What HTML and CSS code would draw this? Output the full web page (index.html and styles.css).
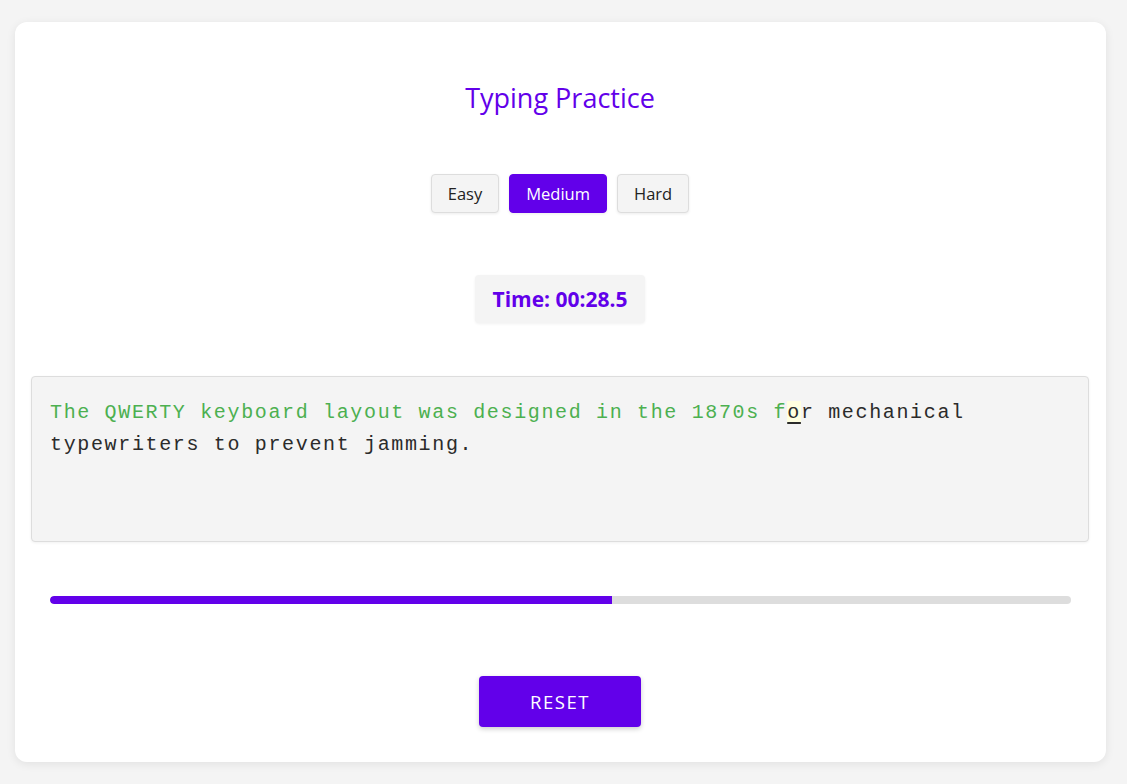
FILE: index.html
```html
<!DOCTYPE html>
<html lang="en">
<head>
<meta charset="utf-8">
<title>Typing Practice</title>
<link rel="stylesheet" href="styles.css">
</head>
<body>
<main class="card">
  <h1 class="title">Typing Practice</h1>
  <div class="levels">
    <button class="level">Easy</button>
    <button class="level active">Medium</button>
    <button class="level">Hard</button>
  </div>
  <div class="timer-wrap"><div class="timer">Time: 00:28.5</div></div>
  <div class="passage"><span class="done">The QWERTY keyboard layout was designed in the 1870s f</span><span class="current">o</span><span class="todo">r mechanical typewriters to prevent jamming.</span></div>
  <div class="progress"><div class="progress-fill" style="width: 55%"></div></div>
  <div class="actions"><button class="reset">RESET</button></div>
</main>
</body>
</html>
```

FILE: styles.css
```css
* { box-sizing: border-box; }
html, body { margin: 0; padding: 0; }
body {
  background: #f4f4f4;
  font-family: "Open Sans", "Noto Sans", sans-serif;
  color: #333;
  padding: 22px 21px 22px 15px;
}
.card {
  background: #fff;
  border-radius: 12px;
  box-shadow: 0 2px 10px rgba(0,0,0,0.08);
  padding: 56px 17px 34px 16px;
  height: 740px;
}
.title {
  margin: 0;
  text-align: center;
  font-weight: 400;
  font-size: 27px;
  line-height: 40px;
  color: #6200ea;
}
.levels {
  display: flex;
  justify-content: center;
  gap: 10px;
  margin-top: 56px;
}
.level {
  height: 39px;
  padding: 0 16px;
  font-family: inherit;
  font-size: 16.5px;
  color: #222;
  background: #f4f4f4;
  border: 1px solid #ddd;
  border-radius: 4px;
  box-shadow: 0 1px 3px rgba(0,0,0,0.08);
}
.level.active {
  background: #6200ea;
  border-color: #6200ea;
  color: #fff;
}
.timer-wrap {
  display: flex;
  justify-content: center;
  margin-top: 62px;
}
.timer {
  height: 48px;
  padding: 0 17px;
  display: flex;
  align-items: center;
  background: #f4f4f4;
  border-radius: 4px;
  box-shadow: 0 1px 3px rgba(0,0,0,0.06);
  color: #6200ea;
  font-weight: 700;
  font-size: 21px;
}
.passage {
  margin-top: 53px;
  height: 166px;
  padding: 20px 18px 16px;
  background: #f4f4f4;
  border: 1px solid #ddd;
  border-radius: 4px;
  box-shadow: 0 1px 3px rgba(0,0,0,0.06);
  font-family: "Liberation Mono", "Courier New", monospace;
  font-size: 20px;
  line-height: 32px;
  letter-spacing: 1.65px;
  color: #2b2b2b;
}
.done { color: #4cb050; }
.current {
  background: #ffffe0;
  text-decoration: underline;
  text-underline-offset: 4px;
}
.progress {
  margin: 54px 18px 0 19px;
  height: 8px;
  background: #ddd;
  border-radius: 4px;
  overflow: hidden;
}
.progress-fill {
  height: 100%;
  background: #6200ea;
  border-radius: 4px 0 0 4px;
}
.actions {
  display: flex;
  justify-content: center;
  margin-top: 72px;
}
.reset {
  width: 162px;
  height: 51px;
  background: #6200ea;
  color: #fff;
  border: none;
  border-radius: 4px;
  font-family: inherit;
  font-size: 18.5px;
  letter-spacing: 1.5px;
  box-shadow: 0 2px 5px rgba(0,0,0,0.2);
}
```
